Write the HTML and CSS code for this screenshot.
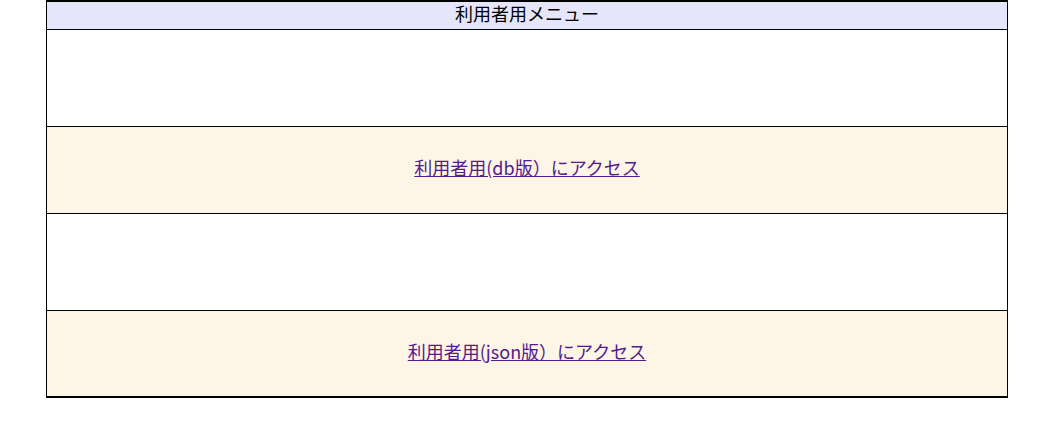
FILE: index.html
```html
<!DOCTYPE html>
<html lang="ja">
<head>
<meta charset="utf-8">
<title>利用者用メニュー</title>
<link rel="stylesheet" href="styles.css">
</head>
<body>
<div class="menu">
  <div class="menu-head"><span class="head-text">利用者用メニュー</span></div>
  <div class="row row-blank"></div>
  <div class="row row-link"><a class="link" href="#db">利用者用(db版）にアクセス</a></div>
  <div class="row row-blank"></div>
  <div class="row row-link row-last"><a class="link" href="#json">利用者用(json版）にアクセス</a></div>
</div>
</body>
</html>
```
FILE: styles.css
```css
html, body {
  margin: 0;
  padding: 0;
  background: #ffffff;
}
body {
  font-family: "Noto Sans CJK JP", "Noto Sans", sans-serif;
  font-size: 18px;
  color: #000;
}
.menu {
  width: 960px;
  margin-left: 46px;
  border-left: 1px solid #000;
  border-right: 1px solid #000;
  border-top: 2px solid #000;
  border-bottom: 2px solid #000;
  display: flex;
  flex-direction: column;
}
.menu-head {
  height: 27px;
  background: #e6e6fa;
  border-bottom: 1px solid #000;
  display: flex;
  align-items: center;
  justify-content: center;
  line-height: 1;
}
.head-text {
  margin-bottom: 5px;
}
.row {
  display: flex;
  align-items: center;
  justify-content: center;
  border-bottom: 1px solid #000;
}
.row-blank {
  height: 96px;
  background: #ffffff;
}
.row-link {
  height: 86px;
  background: #fdf5e6;
}
.row-last {
  height: 85px;
  border-bottom: none;
}
.link {
  color: #551a8b;
  text-decoration: underline;
  line-height: 1;
  margin-bottom: 6px;
}
```
